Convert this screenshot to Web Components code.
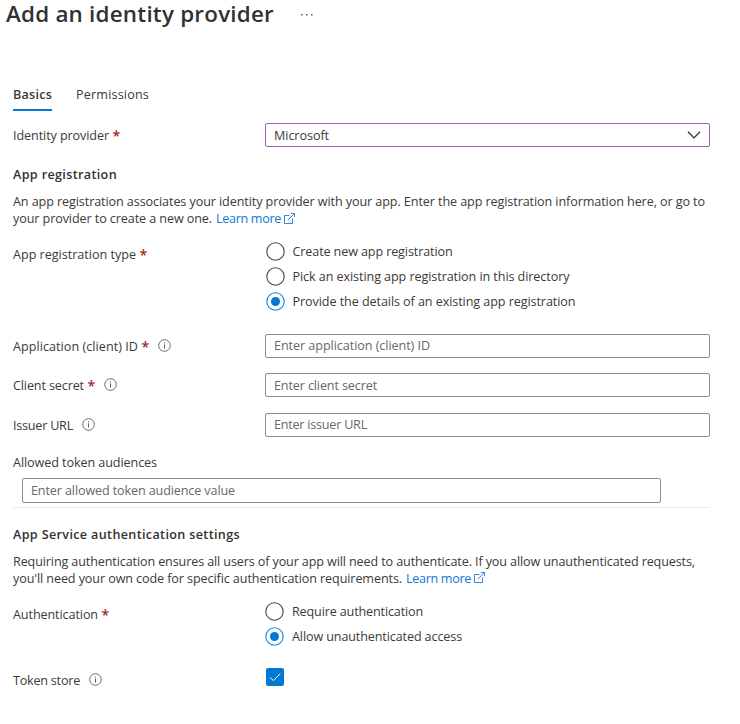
<!DOCTYPE html>
<html lang="en">
<head>
<meta charset="utf-8">
<title>Add an identity provider</title>
<style>
  html, body { margin: 0; background: #fff; }
  body { font: 12.6px/17px "Open Sans", "Noto Sans", sans-serif; color: #3b3a39; width: 740px; min-height: 724px; }
</style>
</head>
<body>
<identity-page></identity-page>
<script>
const define = (name, html, setup) => {
  const t = document.createElement('template');
  t.innerHTML = html;
  customElements.define(name, class extends HTMLElement {
    connectedCallback() {
      if (this.shadowRoot) return;
      this.attachShadow({ mode: 'open' }).append(t.content.cloneNode(true));
      if (setup) setup.call(this, this.shadowRoot);
    }
  });
};

// One line of text, tracked so that it spans the width given in "w".
define('fit-text', `<style>
  :host { display: inline-block; white-space: nowrap; }
</style><slot></slot>`, function () {
  const text = this.textContent;
  const natural = this.getBoundingClientRect().width;
  if (this.hasAttribute('w') && text.length) {
    const d = (Number(this.getAttribute('w')) - natural) / text.length;
    this.style.letterSpacing = d.toFixed(3) + 'px';
  }
});

define('info-icon', `<style>:host { display: block; width: 13px; height: 13px; } svg { display: block; }</style>
<svg width="13" height="13" viewBox="0 0 13 13" fill="none" stroke="#605e5c"><circle cx="6.5" cy="6.5" r="5.8" stroke-width=".9"/><path d="M6.5 5.4V9.6M6.5 3.3v1.1" stroke-width="1"/></svg>`);

define('link-more', `<style>
  :host { display: inline-flex; align-items: center; gap: 3px; color: #0f78d4; }
  svg { display: block; margin-top: -1px; }
</style><fit-text w="65">Learn more</fit-text>
<svg width="11" height="11" viewBox="0 0 11 11" fill="none" stroke="#3f83dc" stroke-width="1"><path d="M5.5 2.5H.5v8h8V5.5M3.8 7.2 10.2.8M6.8.5h3.7v3.7"/></svg>`);

define('page-title', `<style>
  :host { display: flex; align-items: center; height: 28px; padding-left: 6px; gap: 27px; }
  h1 { margin: 0; font-size: 22.4px; line-height: 28px; font-weight: 600; color: #323130; }
  svg { display: block; margin-top: 2px; }
</style><h1><slot></slot></h1>
<svg width="12" height="2" viewBox="0 0 12 2" fill="#605e5c"><path d="M0 0h1.5v1.5H0zM5 0h1.5v1.5H5zM10 0h1.5v1.5H10z"/></svg>`);

define('tab-item', `<style>
  :host { display: block; height: 24px; line-height: 19px; border-bottom: 2px solid transparent; }
  :host([active]) { font-weight: 600; border-bottom-color: #0078d4; }
</style><slot></slot>`);

define('tab-bar', `<style>
  :host { display: flex; gap: 24px; padding-left: 13px; margin-top: 57px; height: 38px; }
</style><slot></slot>`);

define('form-row', `<style>
  :host { display: grid; grid-template-columns: 252px 445px; margin-bottom: var(--after, 0); }
  .label { display: flex; align-items: center; height: var(--label-height, 24px); padding-top: 1px; box-sizing: border-box; }
  .star { display: none; color: #a4262c; font-weight: 600; font-size: 14px; margin-left: 3.5px; height: 17px; }
  :host([required]) .star { display: block; }
  info-icon { display: none; margin: -1px 0 0 8.5px; }
  :host([info]) info-icon { display: block; }
</style><div class="label"><slot name="label"></slot><span class="star">*</span><info-icon></info-icon></div><slot></slot>`);

define('text-box', `<style>
  :host { display: flex; align-items: center; box-sizing: border-box; height: 24px; padding: 0 8px; border: 1px solid #8f8d8b; border-radius: 2px; color: #69676a; }
</style><slot></slot>`);

define('select-box', `<style>
  :host { display: flex; align-items: center; justify-content: space-between; box-sizing: border-box; height: 24px; padding: 0 8px; border: 1px solid #a55cbb; border-radius: 2px; }
  svg { display: block; }
</style><slot></slot>
<svg width="14" height="8" viewBox="0 0 14 8" fill="none" stroke="#323130" stroke-width="1.3"><path d="M1 .8 7 6.9 13 .8"/></svg>`);

define('radio-option', `<style>
  :host { display: flex; align-items: center; height: 25.2px; gap: 8px; }
  svg { display: block; }
  .on { display: none; }
  :host([checked]) .on { display: block; }
  :host([checked]) .off { display: none; }
</style>
<svg class="off" width="19" height="19" viewBox="0 0 19 19"><circle cx="9.5" cy="9.5" r="8.7" fill="none" stroke="#484644" stroke-width="1.1"/></svg>
<svg class="on" width="19" height="19" viewBox="0 0 19 19"><circle cx="9.5" cy="9.5" r="8.7" fill="none" stroke="#1b80d8" stroke-width="1.1"/><circle cx="9.5" cy="9.5" r="4.5" fill="#0078d4"/></svg>
<slot></slot>`);

define('radio-list', `<style>:host { display: block; padding-left: .5px; }</style><slot></slot>`);

define('check-box', `<style>
  :host { display: block; width: 18px; height: 18px; margin-left: 1px; background: #0078d4; border-radius: 2px; }
  svg { display: block; }
</style><svg width="18" height="18" viewBox="0 0 18 18" fill="none" stroke="#fff" stroke-width="1"><path d="m4 9.2 3.4 3.5L14.3 5.5"/></svg>`);

define('section-title', `<style>:host { display: block; height: 20px; line-height: 19px; font-weight: 600; color: #323130; }</style><slot></slot>`);
define('section-note', `<style>:host { display: block; height: 34px; } ::slotted(div) { display: flex; height: 17px; gap: 4px; }</style><slot></slot>`);

define('identity-page', `<style>
  :host { display: block; }
  main { display: flex; flex-direction: column; padding-left: 13px; width: 697px; }
  .audience { width: 639px; height: 25px; margin: 7px 0 4px 9px; }
  .cap { height: 17px; }
  .rule { height: 1px; background: #edebe9; }
</style>
<page-title><fit-text w="268">Add an identity provider</fit-text></page-title>
<tab-bar><tab-item active><fit-text w="39">Basics</fit-text></tab-item><tab-item><fit-text w="73">Permissions</fit-text></tab-item></tab-bar>
<main>
  <form-row required style="--after:17px"><fit-text slot="label" w="96">Identity provider</fit-text><select-box><fit-text w="55">Microsoft</fit-text></select-box></form-row>
  <section-title style="padding-top:1px;height:19px"><fit-text w="104">App registration</fit-text></section-title>
  <section-note style="margin:9px 0 12px">
    <div><fit-text w="692">An app registration associates your identity provider with your app. Enter the app registration information here, or go to</fit-text></div>
    <div><fit-text w="199">your provider to create a new one.</fit-text><link-more></link-more></div>
  </section-note>
  <form-row required style="--after:19px;--label-height:30px"><fit-text slot="label" w="123">App registration type</fit-text>
    <radio-list>
      <radio-option><fit-text w="160">Create new app registration</fit-text></radio-option>
      <radio-option><fit-text w="277">Pick an existing app registration in this directory</fit-text></radio-option>
      <radio-option checked><fit-text w="283">Provide the details of an existing app registration</fit-text></radio-option>
    </radio-list></form-row>
  <form-row required info style="--after:15px"><fit-text slot="label" w="125">Application (client) ID</fit-text><text-box><fit-text w="156">Enter application (client) ID</fit-text></text-box></form-row>
  <form-row required info style="--after:16px"><fit-text slot="label" w="71">Client secret</fit-text><text-box style="padding-top:1px"><fit-text w="103">Enter client secret</fit-text></text-box></form-row>
  <form-row info style="--after:17px"><fit-text slot="label" w="60">Issuer URL</fit-text><text-box><fit-text w="93">Enter issuer URL</fit-text></text-box></form-row>
  <div class="cap"><fit-text w="144">Allowed token audiences</fit-text></div>
  <text-box class="audience"><fit-text w="204">Enter allowed token audience value</fit-text></text-box>
  <div class="rule"></div>
  <section-title style="margin-top:16px;padding-top:1px;height:19px"><fit-text w="227">App Service authentication settings</fit-text></section-title>
  <section-note style="margin:9px 0 12px">
    <div><fit-text w="682">Requiring authentication ensures all users of your app will need to authenticate. If you allow unauthenticated requests,</fit-text></div>
    <div><fit-text w="389">you'll need your own code for specific authentication requirements.</fit-text><link-more></link-more></div>
  </section-note>
  <form-row required style="--after:19px;--label-height:30px"><fit-text slot="label" w="85">Authentication</fit-text>
    <radio-list style="padding-left:0">
      <radio-option><fit-text w="131">Require authentication</fit-text></radio-option>
      <radio-option checked><fit-text w="170">Allow unauthenticated access</fit-text></radio-option>
    </radio-list></form-row>
  <form-row info><fit-text slot="label" w="67">Token store</fit-text><check-box></check-box></form-row>
</main>`);
</script>
</body>
</html>
